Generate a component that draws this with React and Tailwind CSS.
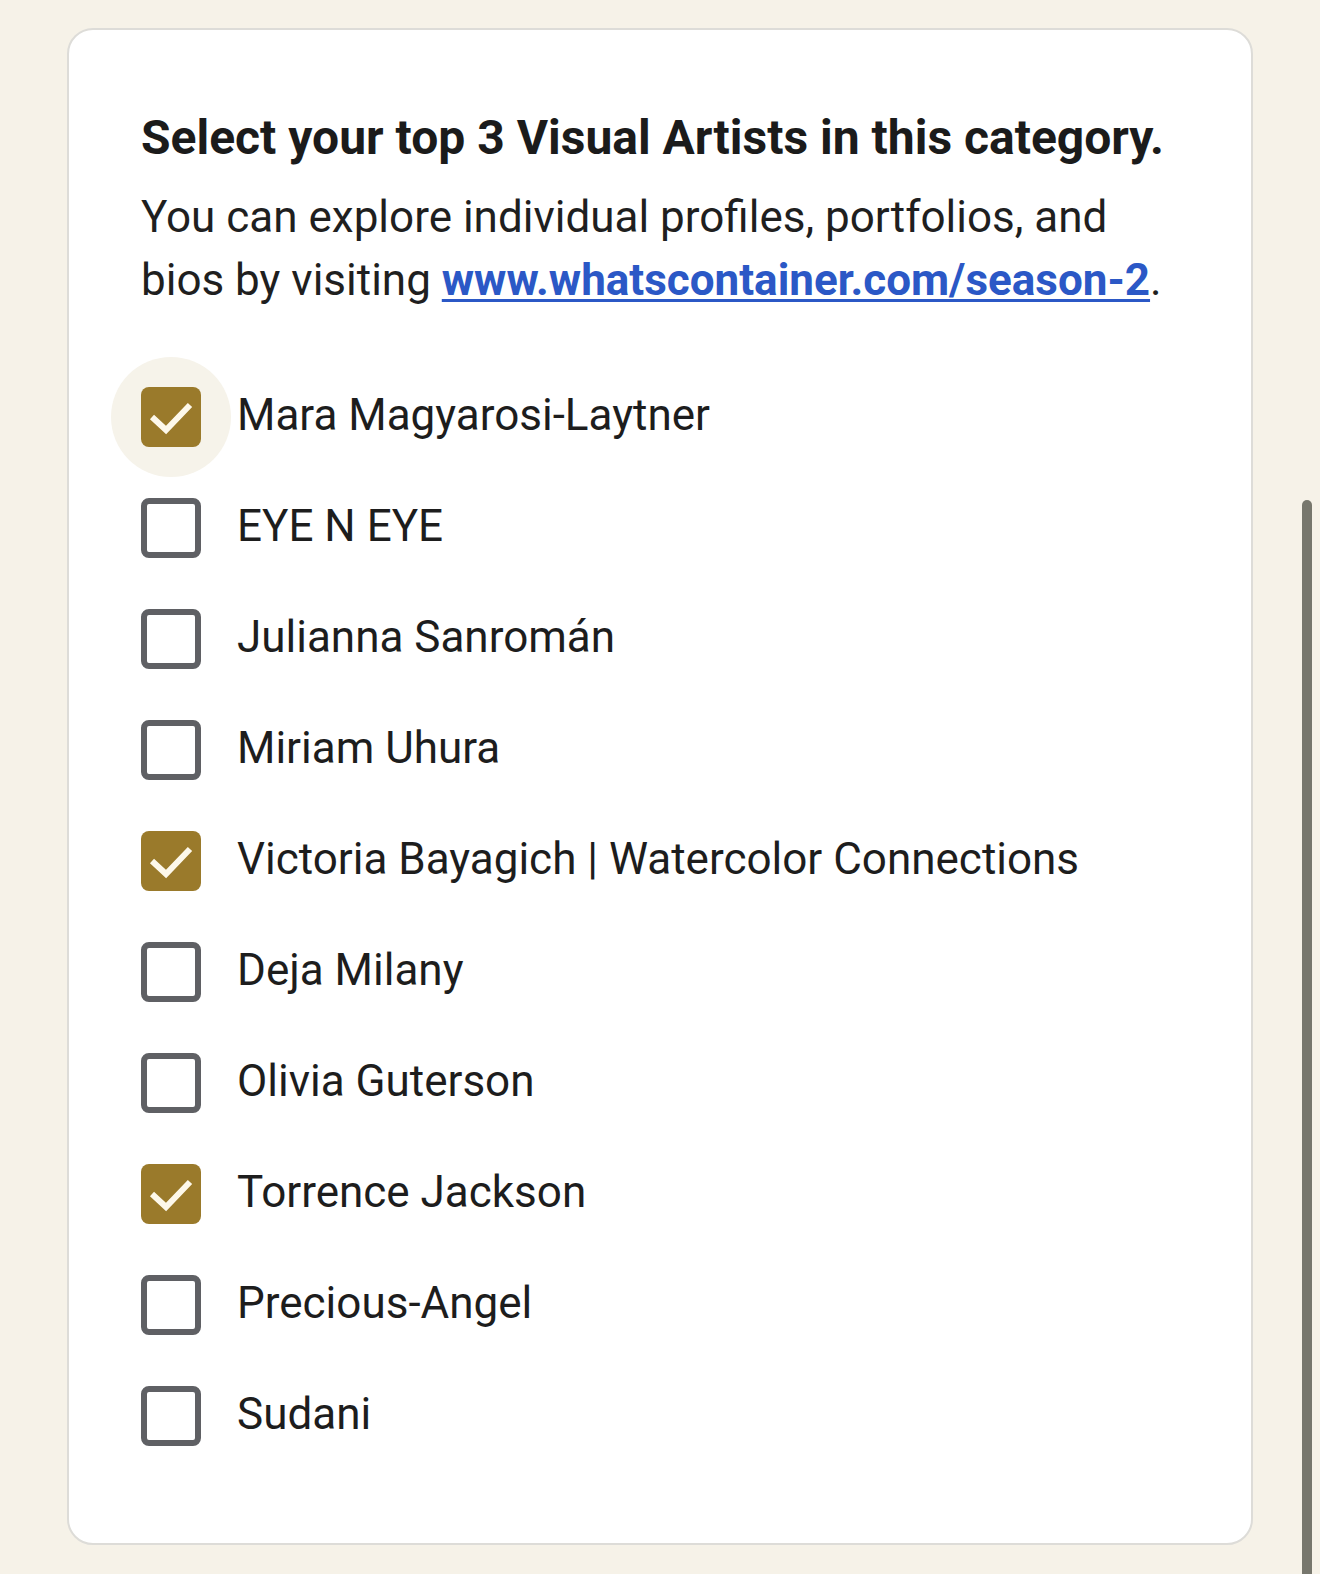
import React from 'react';

const artists = [
  { name: 'Mara Magyarosi-Laytner', checked: true, focused: true },
  { name: 'EYE N EYE' },
  { name: 'Julianna Sanromán' },
  { name: 'Miriam Uhura' },
  { name: 'Victoria Bayagich | Watercolor Connections', checked: true },
  { name: 'Deja Milany' },
  { name: 'Olivia Guterson' },
  { name: 'Torrence Jackson', checked: true },
  { name: 'Precious-Angel' },
  { name: 'Sudani' },
];

function Checkbox({ checked, focused }) {
  return (
    <div className="relative w-[60px] h-[60px] shrink-0">
      {/* focus ripple */}
      {focused && (
        <span className="absolute -inset-[30px] rounded-full bg-[#f6f3ea]" />
      )}
      {checked ? (
        <div className="relative w-full h-full rounded-[8px] bg-[#9a7a2b]">
          <svg viewBox="0 0 60 60" className="w-full h-full" fill="none">
            <polyline
              points="11,30 25,43 49,18"
              stroke="#fdf8ea"
              strokeWidth="6"
              strokeLinejoin="miter"
            />
          </svg>
        </div>
      ) : (
        <div className="relative w-full h-full rounded-[8px] border-[6px] border-[#5f6064] bg-white" />
      )}
    </div>
  );
}

export default function App() {
  return (
    <div
      className="relative min-h-[1574px] bg-[#f6f2e8] px-[67px] pt-[28px] overflow-hidden"
      style={{ fontFamily: 'Roboto, "Noto Sans", sans-serif' }}
    >
      <div className="rounded-[26px] border-2 border-[#dddcd8] bg-white px-[72px] pt-[80px] pb-[72px]">
        <h1 className="text-[48px] leading-[56px] font-bold text-[#1b1b1b]">
          Select your top 3 Visual Artists in this category.
        </h1>
        <p className="mt-[20px] text-[44px] leading-[63px] text-[#1f1f1f]">
          You can explore individual profiles, portfolios, and bios by visiting{' '}
          <a
            href="#"
            className="font-bold text-[#2b58c6] underline decoration-[3px] underline-offset-[4px]"
          >
            www.whatscontainer.com/season-2
          </a>
          .
        </p>

        <ul className="mt-[49px] flex flex-col">
          {artists.map((a) => (
            <li key={a.name} className="h-[111px] flex items-center gap-[36px]">
              <Checkbox checked={a.checked} focused={a.focused} />
              <span className="pb-[4px] text-[44px] leading-[52px] text-[#1d1d1d] whitespace-nowrap">
                {a.name}
              </span>
            </li>
          ))}
        </ul>
      </div>

      {/* overlay scrollbar */}
      <div className="absolute right-[8px] top-[500px] bottom-0 w-[10px] rounded-t-full bg-[#77776d]" />
    </div>
  );
}
